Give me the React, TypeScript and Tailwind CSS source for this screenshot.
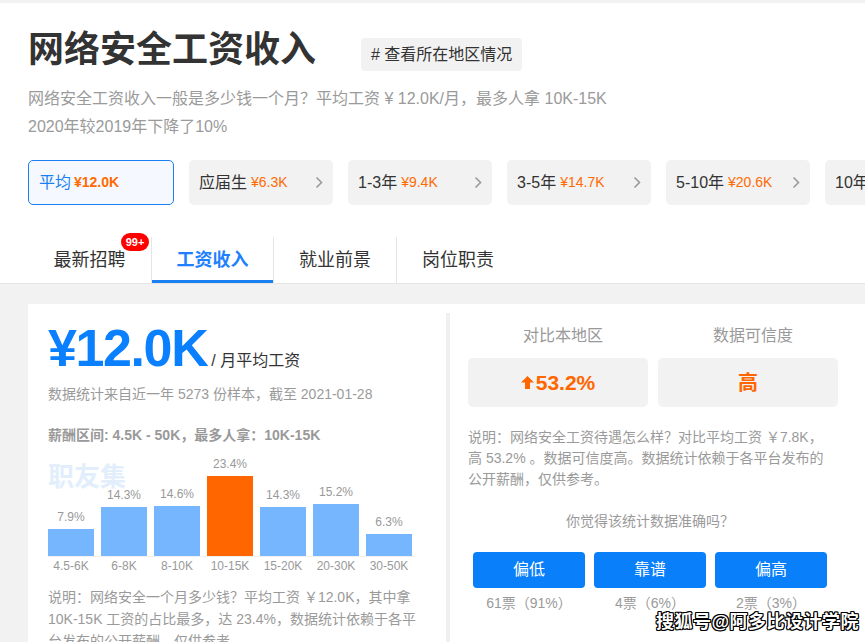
import React from "react";

const bars = [
  { label: "4.5-6K", pct: 7.9 },
  { label: "6-8K", pct: 14.3 },
  { label: "8-10K", pct: 14.6 },
  { label: "10-15K", pct: 23.4, hot: true },
  { label: "15-20K", pct: 14.3 },
  { label: "20-30K", pct: 15.2 },
  { label: "30-50K", pct: 6.3 },
];

const chips = [
  { name: "应届生", val: "¥6.3K" },
  { name: "1-3年", val: "¥9.4K" },
  { name: "3-5年", val: "¥14.7K" },
  { name: "5-10年", val: "¥20.6K" },
  { name: "10年以上", val: "¥26.1K" },
];

function Chevron() {
  return (
    <svg width="8" height="13" viewBox="0 0 8 13" fill="none">
      <polyline points="1.5,1.5 6.5,6.5 1.5,11.5" stroke="#9a9a9a" strokeWidth="1.6" />
    </svg>
  );
}

function UpArrow() {
  return (
    <svg width="13" height="13" viewBox="0 0 13 13">
      <path d="M6.5 0 L13 6.5 H9 V13 H4 V6.5 H0 Z" fill="#ff6600" />
    </svg>
  );
}

export default function App() {
  return (
    <div className="relative w-[865px] h-[642px] overflow-hidden bg-white [font-family:'Liberation_Sans','Noto_Sans_CJK_SC',sans-serif]">
      <div className="h-[3px] bg-[#f2f2f2]" />
      <div className="px-[28px]">
        <div className="flex items-start pt-[27px]">
          <h1 className="text-[36px] leading-[40px] font-bold text-[#333]">网络安全工资收入</h1>
          <div className="ml-[45px] mt-[8px] h-[33px] px-[10px] rounded-[4px] bg-[#f2f2f2] flex items-center text-[16px] text-[#333]">
            # 查看所在地区情况
          </div>
        </div>
        <div className="mt-[14px] text-[16px] leading-[28px] text-[#9a9a9a] whitespace-nowrap">
          <div>网络安全工资收入一般是多少钱一个月？平均工资 ¥ 12.0K/月，最多人拿 10K-15K</div>
          <div>2020年较2019年下降了10%</div>
        </div>
        <div className="mt-[19px] flex gap-[15px]">
          <div className="shrink-0 w-[146px] h-[45px] rounded-[5px] border border-[#1a7ff0] bg-[#f5f9ff] flex items-center pl-[10px]">
            <span className="text-[16px] text-[#1a7ff0]">平均</span>
            <span className="ml-[3px] text-[14px] font-bold text-[#ff6a00]">¥12.0K</span>
          </div>
          {chips.map((c) => (
            <div
              key={c.name}
              className="shrink-0 w-[144px] h-[45px] rounded-[5px] bg-[#f2f2f2] flex items-center pl-[10px] pr-[10px]"
            >
              <span className="text-[16px] text-[#333]">{c.name}</span>
              <span className="ml-[4px] text-[14px] text-[#ff6a00]">{c.val}</span>
              <span className="ml-auto flex items-center">
                <Chevron />
              </span>
            </div>
          ))}
        </div>
        <div className="mt-[32px] flex h-[46px]">
          <div className="relative w-[123px] flex items-center justify-center text-[18px] text-[#333]">
            最新招聘
            <span className="absolute left-[93px] top-[-4px] w-[28px] h-[18px] rounded-full bg-[#f00] text-white text-[11px] font-bold flex items-center justify-center leading-none">
              99+
            </span>
          </div>
          <div className="relative w-[122px] border-l border-[#e5e5e5] flex items-center justify-center text-[18px] font-bold text-[#1e80ff]">
            工资收入
            <span className="absolute left-0 right-0 bottom-0 h-[3px] bg-[#1a7ff0]" />
          </div>
          <div className="w-[123px] border-l border-[#e5e5e5] flex items-center justify-center text-[18px] text-[#333]">
            就业前景
          </div>
          <div className="w-[123px] border-l border-[#e5e5e5] flex items-center justify-center text-[18px] text-[#333]">
            岗位职责
          </div>
        </div>
      </div>

      <div className="border-t border-[#e6e6e6] bg-[#f2f2f2] pt-[20px] pl-[28px]">
        <div className="bg-white flex h-[360px]">
          <div className="w-[418px] shrink-0 pl-[20px] pt-[18px]">
            <div className="flex items-baseline">
              <span className="text-[52px] leading-[52px] font-bold tracking-[-1.4px] text-[#0a80ff]">¥12.0K</span>
              <span className="ml-[4px] text-[16px] text-[#333]">/ 月平均工资</span>
            </div>
            <div className="mt-[10px] text-[14px] leading-[20px] text-[#9a9a9a]">
              数据统计来自近一年 5273 份样本，截至 2021-01-28
            </div>
            <div className="mt-[21px] text-[14px] leading-[20px] font-bold text-[#999]">
              薪酬区间: 4.5K - 50K，最多人拿：10K-15K
            </div>
            <div className="relative mt-[10px] w-[366px]">
              <div className="absolute left-0 top-[8px] text-[26px] leading-[28px] font-bold text-[#e2eefc]">职友集</div>
              <div className="relative flex items-end gap-[7px] h-[102px] border-b border-[#eeeeee]">
                {bars.map((b) => (
                  <div key={b.label} className="w-[46px] flex flex-col items-center justify-end">
                    <span className="text-[12px] leading-[16px] text-[#999] mb-[4px]">{b.pct}%</span>
                    <div
                      className={b.hot ? "w-[46px] bg-[#ff6600]" : "w-[46px] bg-[#76b6ff]"}
                      style={{ height: Math.round(b.pct * 3.42) }}
                    />
                  </div>
                ))}
              </div>
              <div className="flex gap-[7px] mt-[1px]">
                {bars.map((b) => (
                  <div key={b.label} className="w-[46px] text-center text-[12px] leading-[16px] text-[#999] whitespace-nowrap">
                    {b.label}
                  </div>
                ))}
              </div>
            </div>
            <div className="mt-[12px] text-[14px] leading-[22px] text-[#9a9a9a] whitespace-nowrap">
              说明：网络安全一个月多少钱？平均工资 ￥12.0K，其中拿
              <br />
              10K-15K 工资的占比最多，达 23.4%，数据统计依赖于各平
              <br />
              台发布的公开薪酬，仅供参考。
            </div>
          </div>

          <div className="mt-[9px] flex-1 border-l-[4px] border-[#f0f0f0] pl-[18px] pt-[12px]">
            <div className="grid grid-cols-[190px_190px] w-[380px]">
              <div>
                <div className="text-center text-[16px] leading-[22px] text-[#999]">对比本地区</div>
                <div className="mt-[11px] w-[180px] h-[49px] rounded-[5px] bg-[#f2f2f2] flex items-center justify-center gap-[2px]">
                  <UpArrow />
                  <span className="text-[21px] font-bold text-[#ff6600]">53.2%</span>
                </div>
              </div>
              <div>
                <div className="text-center text-[16px] leading-[22px] text-[#999]">数据可信度</div>
                <div className="mt-[11px] w-[180px] h-[49px] rounded-[5px] bg-[#f2f2f2] flex items-center justify-center">
                  <span className="text-[20px] font-bold text-[#ff6600]">高</span>
                </div>
              </div>
            </div>
            <div className="mt-[20px] w-[364px] text-[14px] leading-[21px] text-[#9a9a9a] whitespace-nowrap">
              说明：网络安全工资待遇怎么样？对比平均工资 ￥7.8K，
              <br />
              高 53.2% 。数据可信度高。数据统计依赖于各平台发布的
              <br />
              公开薪酬，仅供参考。
            </div>
            <div className="mt-[20px] w-[364px] text-center text-[14px] leading-[22px] text-[#9a9a9a]">
              你觉得该统计数据准确吗？
            </div>
            <div className="mt-[20px] w-[364px] flex justify-center gap-[9px]">
              {["偏低", "靠谱", "偏高"].map((t) => (
                <div key={t} className="w-[112px] h-[36px] rounded-[4px] bg-[#0a7ffa] text-white text-[16px] flex items-center justify-center">
                  {t}
                </div>
              ))}
            </div>
            <div className="mt-[5px] w-[364px] flex justify-center gap-[9px]">
              {["61票（91%）", "4票（6%）", "2票（3%）"].map((t) => (
                <div key={t} className="w-[112px] text-center text-[14px] leading-[20px] text-[#9a9a9a]">
                  {t}
                </div>
              ))}
            </div>
          </div>
        </div>
      </div>

      <div className="absolute left-[656px] top-[611px] text-[18px] leading-[22px] font-bold text-white tracking-[0.5px] [text-shadow:-1px_-1px_0_#000,1px_-1px_0_#000,-1px_1px_0_#000,1px_1px_0_#000,0_1px_0_#000,0_-1px_0_#000,1px_0_0_#000,-1px_0_0_#000]">
        搜狐号@阿多比设计学院
      </div>
    </div>
  );
}
